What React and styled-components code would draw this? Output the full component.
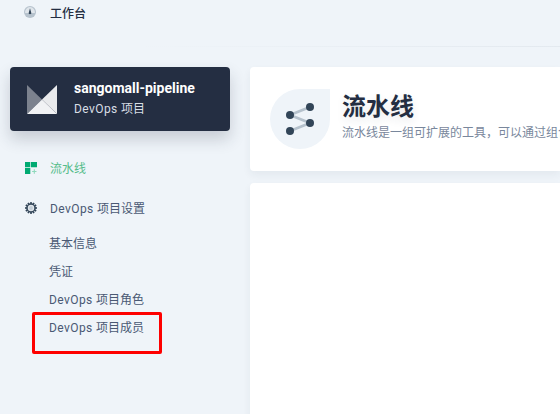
import React from 'react';
import styled, { createGlobalStyle } from 'styled-components';

const GlobalStyle = createGlobalStyle`
  * { box-sizing: border-box; }
  body {
    margin: 0;
    overflow: hidden;
    background: #eff4f9;
    font-family: Roboto, "Noto Sans CJK SC", sans-serif;
    font-size: 12px;
    line-height: 20px;
    color: #4a5974;
  }
`;

const Page = styled.div`
  height: 414px;
  overflow: hidden;
  background: #eff4f9;
`;

const Header = styled.header`
  height: 47px;
  padding: 4px 0 0 24px;
  border-bottom: 1px solid;
  border-image: linear-gradient(to right, #eff4f9 25%, #e3e9ef 100%) 1;
`;

const Workbench = styled.div`
  display: flex;
  align-items: center;
  gap: 14px;
  height: 20px;
  color: #242e42;
  font-weight: 500;

  svg { margin-top: -4px; }
`;

const Body = styled.div`
  display: flex;
  gap: 20px;
  padding: 20px 0 0 10px;
`;

const Sidebar = styled.aside`
  flex: 0 0 220px;
`;

const ProjectCard = styled.div`
  display: flex;
  align-items: center;
  gap: 17px;
  height: 64px;
  padding-left: 17px;
  border-radius: 4px;
  background: #242e42;
  box-shadow: 0 8px 16px 0 rgba(36, 46, 66, 0.2);
`;

const ProjectName = styled.div`
  position: relative;
  top: -1px;
  color: #fff;
  font-size: 14px;
  font-weight: 700;
  line-height: 20px;
`;

const ProjectKind = styled.div`
  color: #d8dee5;
  line-height: 20px;
`;

const Latin = styled.span`
  letter-spacing: 0.42px;
`;

const Nav = styled.nav`
  padding: 18px 0 0 14px;
`;

const NavItem = styled.div`
  display: flex;
  align-items: center;
  gap: 12px;
  height: 40px;
  color: ${(p) => (p.$active ? '#55bc8a' : '#4a5974')};

  svg {
    flex: none;
    margin-top: -2px;
  }
`;

const SubNav = styled.div`
  padding: 1px 0 0 25px;
`;

const SubItem = styled.div`
  height: 28px;
  line-height: 28px;
`;

const Highlight = styled.div`
  position: absolute;
  left: 32px;
  top: 312px;
  width: 130px;
  height: 42px;
  border: 3px solid #fe0000;
  border-radius: 2px;
`;

const Main = styled.main`
  display: flex;
  flex: 1;
  flex-direction: column;
  gap: 12px;
  min-width: 0;
`;

const Panel = styled.section`
  height: ${(p) => p.$height}px;
  border-radius: 4px 0 0 4px;
  background: #fff;
  box-shadow: 0 4px 8px 0 rgba(36, 46, 66, 0.06);
`;

const Banner = styled(Panel)`
  display: flex;
  align-items: flex-start;
  gap: 12px;
  padding: 22px 0 0 20px;
  overflow: hidden;
`;

const BannerIcon = styled.div`
  display: flex;
  flex: none;
  align-items: center;
  justify-content: center;
  width: 60px;
  height: 60px;
  border-radius: 50% 0 50% 50%;
  background: #eff4f9;
`;

const BannerText = styled.div`
  padding-top: 2px;
  white-space: nowrap;
`;

const Title = styled.h1`
  margin: 0;
  color: #242e42;
  font-size: 24px;
  font-weight: 700;
  line-height: 32px;
  text-shadow: 0 4px 8px rgba(36, 46, 66, 0.1);
`;

const Description = styled.p`
  margin: 0;
  color: #79879c;
  line-height: 20px;
`;

const CompassIcon = () => (
  <svg width="12" height="12" viewBox="0 0 12 12">
    <circle cx="6" cy="6" r="6" fill="#b6c2cd" />
    <path d="M1.2 7a4.9 4.9 0 1 1 9.6 0z" fill="#dfe5eb" />
    <path d="M6 2.2l1.2 4.2a1.3 1.3 0 1 1-2.4 0z" fill="#324558" />
  </svg>
);

const ProjectLogo = () => (
  <svg width="30" height="29" viewBox="0 0 30 29">
    <path d="M0 0l15 14.5L0 29z" fill="#7c828e" />
    <path d="M30 0v29L15 14.5z" fill="#e9eaec" />
    <path d="M0 29l15-14.5L30 29z" fill="#f1f2f4" />
  </svg>
);

const PipelineNavIcon = () => (
  <svg width="14" height="14" viewBox="0 0 14 14">
    <path d="M1 1h5.3v5.3H1zM7 1h6v5.3H7zM1 7h5.3v6H1z" fill="#00aa72" />
    <path d="M10.3 8.3v4.4M8.1 10.5h4.4" stroke="#8fd9bc" strokeWidth="1.1" />
  </svg>
);

const gearTeeth = [0, 30, 60, 90, 120, 150, 180, 210, 240, 270, 300, 330];

const GearIcon = () => (
  <svg width="14" height="14" viewBox="0 0 14 14">
    {gearTeeth.map((angle) => (
      <rect key={angle} x="6.2" y="1" width="1.6" height="2" fill="#324558" transform={`rotate(${angle} 7 7)`} />
    ))}
    <circle cx="7" cy="7" r="4" fill="#dfe5eb" stroke="#324558" strokeWidth="1.5" />
    <circle cx="7" cy="7" r="1.9" fill="#c3cdd7" />
  </svg>
);

const PipelineIcon = () => (
  <svg width="60" height="60" viewBox="0 0 60 60">
    <path d="M40 18L20 26l20 8-20 8" fill="none" stroke="#b6c2cd" strokeWidth="2.7" />
    <g fill="#324558">
      <circle cx="40" cy="18" r="4" />
      <circle cx="20" cy="26" r="4" />
      <circle cx="40" cy="34" r="4" />
      <circle cx="20" cy="42" r="4" />
    </g>
  </svg>
);

const DevOpsLabel = ({ children }) => (
  <span>
    <Latin>DevOps </Latin>
    {children}
  </span>
);

const settings = [
  { label: '基本信息' },
  { label: '凭证' },
  { label: '项目角色', devops: true },
  { label: '项目成员', devops: true },
];

export default function App() {
  return (
    <Page>
      <GlobalStyle />
      <Header>
        <Workbench>
          <CompassIcon />
          <span>工作台</span>
        </Workbench>
      </Header>
      <Body>
        <Sidebar>
          <ProjectCard>
            <ProjectLogo />
            <div>
              <ProjectName>sangomall-pipeline</ProjectName>
              <ProjectKind>
                <DevOpsLabel>项目</DevOpsLabel>
              </ProjectKind>
            </div>
          </ProjectCard>
          <Nav>
            <NavItem $active>
              <PipelineNavIcon />
              <span>流水线</span>
            </NavItem>
            <NavItem>
              <GearIcon />
              <DevOpsLabel>项目设置</DevOpsLabel>
            </NavItem>
            <SubNav>
              {settings.map(({ label, devops }) => (
                <SubItem key={label}>{devops ? <DevOpsLabel>{label}</DevOpsLabel> : label}</SubItem>
              ))}
            </SubNav>
          </Nav>
        </Sidebar>
        <Main>
          <Banner $height={104}>
            <BannerIcon>
              <PipelineIcon />
            </BannerIcon>
            <BannerText>
              <Title>流水线</Title>
              <Description>流水线是一组可扩展的工具，可以通过组合</Description>
            </BannerText>
          </Banner>
          <Panel $height={240} />
        </Main>
      </Body>
      <Highlight />
    </Page>
  );
}
